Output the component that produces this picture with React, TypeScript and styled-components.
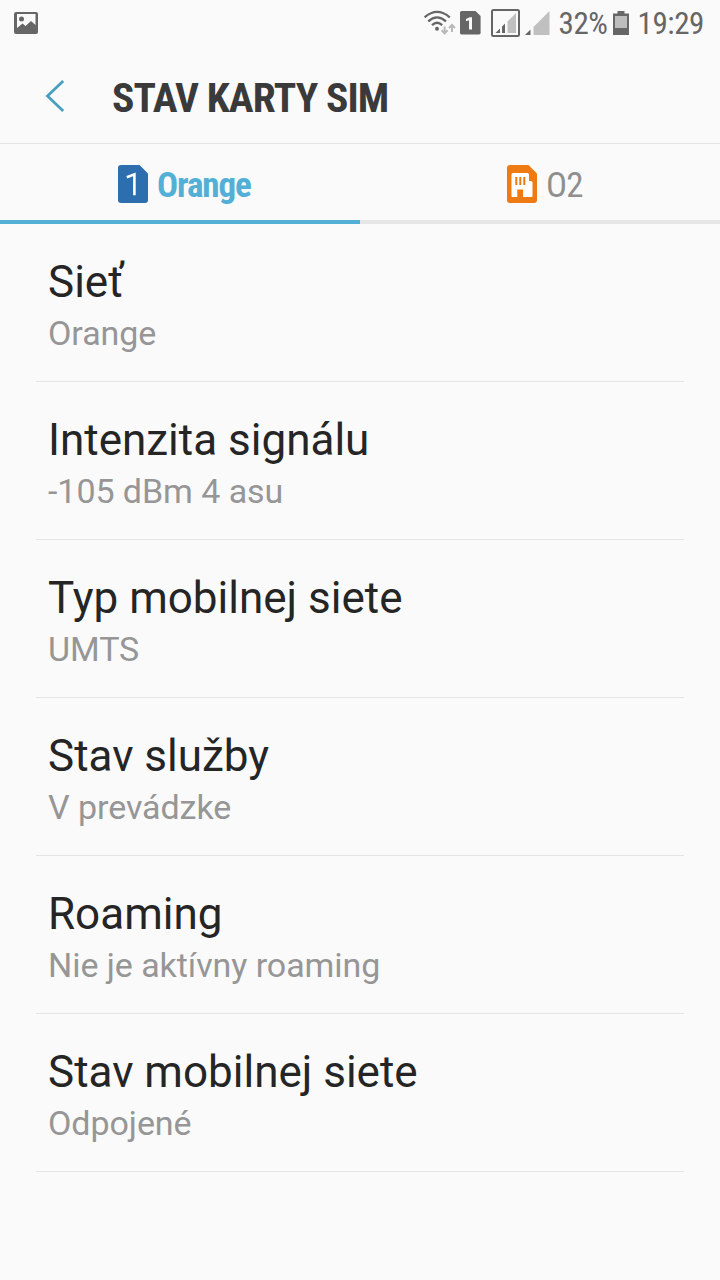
import React from 'react';
import styled, { createGlobalStyle } from 'styled-components';

const GlobalStyle = createGlobalStyle`
  * { box-sizing: border-box; }
  body { margin: 0; background: #fafafa; }
`;

const Screen = styled.div`
  display: flex;
  flex-direction: column;
  width: 720px;
  height: 1280px;
  background: #fafafa;
  font-family: Roboto, sans-serif;
  overflow: hidden;
`;

const StatusBar = styled.div`
  display: flex;
  align-items: center;
  justify-content: space-between;
  height: 46px;
  margin-bottom: 2px;
  padding: 0 16px 0 14px;
  color: #666;
`;

const StatusGroup = styled.div`
  display: flex;
  align-items: center;
`;

const Glyph = styled.svg<{ $gap?: number }>`
  display: block;
  flex: none;
  margin-right: ${p => p.$gap ?? 0}px;
`;

const StatusText = styled.span<{ $gap?: number }>`
  font-family: "Roboto Condensed", Roboto, sans-serif;
  font-stretch: condensed;
  font-size: 31px;
  line-height: 46px;
  letter-spacing: -0.4px;
  padding-top: 2px;
  margin-right: ${p => p.$gap ?? 0}px;
`;

const Header = styled.header`
  display: flex;
  align-items: center;
  height: 96px;
  padding-left: 45px;
  border-bottom: 1px solid #e4e4e4;
`;

const Title = styled.h1`
  margin: 4px 0 0;
  font-family: "Roboto Condensed", Roboto, sans-serif;
  font-stretch: condensed;
  font-size: 41.5px;
  font-weight: 700;
  line-height: 48px;
  letter-spacing: -0.9px;
  color: #3a3a3a;
`;

const Tabs = styled.nav`
  display: flex;
  height: 80px;
`;

const Tab = styled.div<{ $active?: boolean }>`
  display: flex;
  flex: 1;
  align-items: center;
  justify-content: center;
  gap: 9px;
  padding: 4px 0 0 ${p => (p.$active ? 9 : 10)}px;
  border-bottom: 4px solid ${p => (p.$active ? '#52b0d7' : '#e6e6e6')};
  color: ${p => (p.$active ? '#52b0d7' : '#8f8f8f')};
  font-weight: ${p => (p.$active ? 700 : 400)};
  letter-spacing: ${p => (p.$active ? -1.1 : -0.8)}px;
`;

const TabLabel = styled.span`
  font-family: "Roboto Condensed", Roboto, sans-serif;
  font-stretch: condensed;
  font-size: 35px;
  line-height: 40px;
  padding-top: 3px;
`;

const List = styled.main`
  padding: 0 36px;
`;

const Row = styled.section`
  height: 158px;
  padding: 32px 12px 0;
  border-bottom: 1px solid #e4e4e4;
`;

const RowTitle = styled.div`
  font-size: 44px;
  line-height: 52px;
  color: #252525;
`;

const RowValue = styled.div`
  margin-top: 5px;
  font-size: 34px;
  line-height: 40px;
  letter-spacing: -0.06px;
  color: #969696;
`;

const rows = [
  ['Sieť', 'Orange'],
  ['Intenzita signálu', '-105 dBm 4 asu'],
  ['Typ mobilnej siete', 'UMTS'],
  ['Stav služby', 'V prevádzke'],
  ['Roaming', 'Nie je aktívny roaming'],
  ['Stav mobilnej siete', 'Odpojené'],
];

const PictureIcon = () => (
  <Glyph width="24" height="22" viewBox="0 0 24 22">
    <path fillRule="evenodd" fill="#666" d="M2 0H22Q24 0 24 2V20Q24 22 22 22H2Q0 22 0 20V2Q0 0 2 0ZM3 2V16L8.5 11.5L11.5 14L17 9L21.5 13V2Z" />
    <circle cx="7.5" cy="7" r="2.5" fill="#666" />
  </Glyph>
);

const WifiIcon = () => (
  <Glyph $gap={4} width="32" height="26" viewBox="0 0 32 26">
    <g fill="none" stroke="#666" strokeWidth="2.3">
      <path d="M.6 7.3Q13-3.5 25.8 7.3" />
      <path d="M4.2 11.3Q13 3.5 22 11.3" />
      <path d="M8 15.2Q13 10.4 18.2 15.2" />
    </g>
    <circle cx="13" cy="18.8" r="2" fill="#666" />
    <path fill="none" stroke="#b8b8b8" strokeWidth="2" d="M20.6 16.5V23.5M17.6 20.3L20.6 23.3L23.6 20.3M28 22V15M25 18L28 15L31 18" />
  </Glyph>
);

const SimStatusIcon = () => (
  <Glyph $gap={10} width="21" height="24" viewBox="0 0 21 24">
    <path fill="#666" d="M1.5 0H15.5L20.6 5V22Q20.6 23.4 19.2 23.4H1.5Q0 23.4 0 22V1.5Q0 0 1.5 0Z" />
    <path fill="#fafafa" d="M9.7 6.2H12V18.5H9V9.3L6 10.2V8Z" />
  </Glyph>
);

const BoxedSignalIcon = () => (
  <Glyph $gap={5} width="29" height="28" viewBox="0 0 29 28">
    <rect x="1" y="1" width="27" height="26" rx="1.5" fill="none" stroke="#666" strokeWidth="2" />
    <path fill="#666" d="M4.5 24L9 19.5V24ZM11 24V17.5L14 14.5V24Z" />
    <path fill="#c0c0c0" d="M16.5 24V12.5L25 4V24Z" />
  </Glyph>
);

const SignalIcon = () => (
  <Glyph $gap={9} width="25" height="24" viewBox="0 0 25 24">
    <path fill="#666" d="M0 24L5.5 18.5V24Z" />
    <path fill="#c0c0c0" d="M8.5 24V16L24.5 0V24Z" />
  </Glyph>
);

const BatteryIcon = () => (
  <Glyph $gap={9} width="16" height="24" viewBox="0 0 16 24">
    <path fill="#666" d="M4.5 0H11.5V2.5H16V24H0V2.5H4.5Z" />
    <path fill="#bdbdbd" d="M2 5H14V17H2Z" />
  </Glyph>
);

const BackIcon = () => (
  <Glyph $gap={47} width="20" height="34" viewBox="0 0 20 34">
    <path fill="none" stroke="#479fc1" strokeWidth="2.8" d="M18.2 2L2.5 17L18.2 32" />
  </Glyph>
);

const SimOneIcon = () => (
  <Glyph width="30" height="38" viewBox="0 0 30 38">
    <path fill="#2d6eae" d="M3 0H21.5L30 8.5V35Q30 38 27 38H3Q0 38 0 35V3Q0 0 3 0Z" />
    <path fill="none" stroke="#fff" strokeWidth="2.6" d="M8.8 12.2L16.4 9.4V30.2" />
  </Glyph>
);

const SimBuildingIcon = () => (
  <Glyph width="30" height="38" viewBox="0 0 30 38">
    <path fill="#ee7a14" d="M3 0H21.5L30 8.5V35Q30 38 27 38H3Q0 38 0 35V3Q0 0 3 0Z" />
    <path fill="#fff" d="M6 8H20.5Q22 8 22 9.5V16H24Q25.5 16 25.5 17.5V31Q25.5 32 24.5 32H16V24.5H10.3V32H5.5Q4.5 32 4.5 31V9.5Q4.5 8 6 8Z" />
    <path fill="#ee7a14" d="M8.3 12H10.3V20H8.3ZM12.3 12H14.3V20H12.3ZM16.3 12H18.3V20H16.3Z" />
  </Glyph>
);

export default function App() {
  return (
    <Screen>
      <GlobalStyle />
      <StatusBar>
        <PictureIcon />
        <StatusGroup>
          <WifiIcon />
          <SimStatusIcon />
          <BoxedSignalIcon />
          <SignalIcon />
          <StatusText $gap={5}>32%</StatusText>
          <BatteryIcon />
          <StatusText>19:29</StatusText>
        </StatusGroup>
      </StatusBar>
      <Header>
        <BackIcon />
        <Title>STAV KARTY SIM</Title>
      </Header>
      <Tabs>
        <Tab $active>
          <SimOneIcon />
          <TabLabel>Orange</TabLabel>
        </Tab>
        <Tab>
          <SimBuildingIcon />
          <TabLabel>O2</TabLabel>
        </Tab>
      </Tabs>
      <List>
        {rows.map(([title, value]) => (
          <Row key={title}>
            <RowTitle>{title}</RowTitle>
            <RowValue>{value}</RowValue>
          </Row>
        ))}
      </List>
    </Screen>
  );
}
